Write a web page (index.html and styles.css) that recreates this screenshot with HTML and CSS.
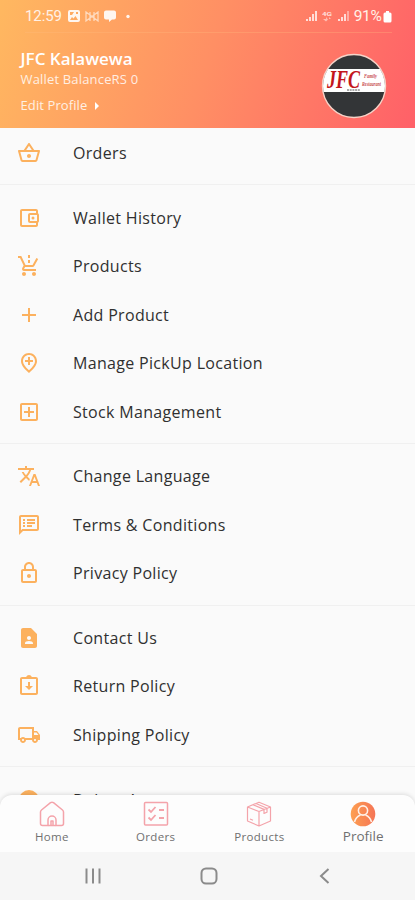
FILE: index.html
```html
<!DOCTYPE html>
<html lang="en">
<head>
<meta charset="utf-8">
<title>Profile</title>
<link rel="stylesheet" href="styles.css">
</head>
<body>
<div class="screen">
  <header class="header">
    <div class="status">
      <span class="clock">12:59</span>
      <svg class="status-left" width="64" height="14" viewBox="0 0 64 14" fill="#fff">
        <path fill-rule="evenodd" d="M2 1h8a2 2 0 0 1 2 2v8a2 2 0 0 1-2 2H2a2 2 0 0 1-2-2V3a2 2 0 0 1 2-2zm0 2v3h2l2-3zm0 8h8L7.500 7 5.500 9.500 4 8zM8 3v2h2V3z"/>
        <path d="M18 3l4 3v3l-4 3zM30 3l-4 3v3l4 3zM22 3v9M26 3v9M22 6l4 3M26 6l-4 3" fill="none" stroke="#fff" stroke-opacity=".65" stroke-width="1.300"/>
        <path d="M38 1.500h8a2 2 0 0 1 2 2v5a2 2 0 0 1-2 2h-2L41 13v-2.500h-3a2 2 0 0 1-2-2v-5a2 2 0 0 1 2-2z"/>
        <circle cx="60" cy="7.500" r="1.700"/>
      </svg>
      <div class="status-right">
        <svg width="44" height="14" viewBox="0 0 44 14" fill="#fff">
          <path opacity=".75" d="M0 10h2v2H0zM3 8h2v4H3zM6 5h2v7H6zM9 2h2v10H9zM32 10h2v2h-2zM35 8h2v4h-2zM38 5h2v7h-2z"/>
          <path opacity=".4" d="M41 2h2v10h-2z"/>
          <text class="network" x="16" y="7" textLength="10" lengthAdjust="spacingAndGlyphs">4G</text>
          <path opacity=".5" d="M17 10h3V8l2 2.500-2 2zM25 10h-2V8z"/>
        </svg>
        <span class="percent">91%</span>
        <svg width="9" height="13" viewBox="0 0 9 13" fill="#fff"><path d="M3 1h3v1.500h1A1.500 1.500 0 0 1 8.500 4v7A1.500 1.500 0 0 1 7 12.500H2A1.500 1.500 0 0 1 .5 11V4A1.500 1.500 0 0 1 2 2.500h1z"/></svg>
      </div>
    </div>
    <div class="account">
      <div>
        <div class="name">JFC Kalawewa</div>
        <div class="balance">Wallet BalanceRS 0</div>
        <div class="edit">Edit Profile <svg width="6" height="8" viewBox="0 0 6 8"><path d="M1 0l4 4-4 4z" fill="#fff"/></svg></div>
      </div>
      <svg class="avatar" width="66" height="66" viewBox="0 0 66 66">
        <defs><clipPath id="disc"><circle cx="33" cy="33" r="31"/></clipPath></defs>
        <circle cx="33" cy="33" r="31.500" fill="#333537" stroke="#f6d3c8" stroke-width="1.400"/>
        <path clip-path="url(#disc)" fill="#fff" d="M0 16h66v23H0z"/>
        <text class="logo" x="6" y="35" textLength="33" lengthAdjust="spacingAndGlyphs">JFC</text>
        <text class="script" x="43" y="25" textLength="13" lengthAdjust="spacingAndGlyphs">Family</text>
        <text class="script" x="41" y="33" textLength="19" lengthAdjust="spacingAndGlyphs">Restaurant</text>
        <path d="M26 37h13" stroke="#555" stroke-dasharray="2 .7"/>
      </svg>
    </div>
  </header>

  <main class="menu">
    <section class="group">
      <div class="row"><svg class="icon" viewBox="0 0 24 24"><path d="M22 9h-4.790l-4.380-6.560c-.19-.28-.51-.42-.83-.42s-.64.14-.83.43L6.790 9H2c-.55 0-1 .45-1 1 0 .09.010.18.040.27l2.540 9.270c.23.84 1 1.460 1.920 1.460h13c.92 0 1.690-.62 1.930-1.460l2.540-9.270L23 10c0-.55-.45-1-1-1zM12 4.800L14.800 9H9.200L12 4.800zM18.500 19l-12.990.010L3.310 11H20.700l-2.200 8zM12 13c-1.100 0-2 .9-2 2s.9 2 2 2 2-.9 2-2-.9-2-2-2z"/></svg><span>Orders</span></div>
    </section>
    <section class="group">
      <div class="row"><svg class="icon" viewBox="0 0 24 24"><path d="M21 7.280V5c0-1.100-.9-2-2-2H5c-1.100 0-2 .9-2 2v14c0 1.100.9 2 2 2h14c1.100 0 2-.9 2-2v-2.280c.59-.35 1-.98 1-1.720V9c0-.74-.41-1.370-1-1.720zM20 9v6h-7V9h7zM5 19V5h14v2h-6c-1.100 0-2 .9-2 2v6c0 1.100.9 2 2 2h6v2H5z"/><circle cx="16" cy="12" r="1.500"/></svg><span>Wallet History</span></div>
      <div class="row"><svg class="icon" viewBox="0 0 24 24"><path d="M11 9h2V6h-2v3zm0-5h2V1h-2v3zM7 18c-1.100 0-1.990.9-1.990 2S5.900 22 7 22s2-.9 2-2-.9-2-2-2zm10 0c-1.100 0-1.990.9-1.990 2s.89 2 1.990 2 2-.9 2-2-.9-2-2-2zm-8.900-5h7.450c.75 0 1.410-.41 1.750-1.030l3.860-7.010L19.420 4l-3.870 7H8.530L4.270 2H1v2h2l3.600 7.590-1.350 2.440C4.520 15.370 5.480 17 7 17h12v-2H7l1.100-2z"/></svg><span>Products</span></div>
      <div class="row"><svg class="icon" viewBox="0 0 24 24"><path d="M19 13h-6v6h-2v-6H5v-2h6V5h2v6h6z"/></svg><span>Add Product</span></div>
      <div class="row"><svg class="icon" viewBox="0 0 24 24"><path fill-rule="evenodd" d="M12 2C7.800 2 4 5.220 4 10.200c0 3.320 2.670 7.250 8 11.800 5.330-4.550 8-8.480 8-11.800C20 5.220 16.200 2 12 2zm0 17.330C7.950 15.640 6 12.540 6 10.200 6 6.570 8.650 4 12 4s6 2.570 6 6.200c0 2.340-1.950 5.440-6 9.130z"/><path d="M13 6h-2v3H8v2h3v3h2v-3h3V9h-3z"/></svg><span>Manage PickUp Location</span></div>
      <div class="row"><svg class="icon" viewBox="0 0 24 24"><path d="M19 3H5c-1.110 0-2 .9-2 2v14c0 1.100.89 2 2 2h14c1.100 0 2-.9 2-2V5c0-1.100-.9-2-2-2zm0 16H5V5h14v14zm-8-2h2v-4h4v-2h-4V7h-2v4H7v2h4z"/></svg><span>Stock Management</span></div>
    </section>
    <section class="group">
      <div class="row"><svg class="icon" viewBox="0 0 24 24"><path d="M12.870 15.070l-2.540-2.510.03-.03c1.740-1.940 2.980-4.170 3.710-6.530H17V4h-7V2H8v2H1v1.990h11.170C11.500 7.920 10.440 9.750 9 11.350 8.070 10.320 7.300 9.190 6.690 8h-2c.73 1.630 1.730 3.170 2.980 4.560l-5.090 5.020L4 19l5-5 3.110 3.110.76-2.040zM18.500 10h-2L12 22h2l1.120-3h4.750L21 22h2l-4.500-12zm-2.620 7l1.620-4.330L19.120 17h-3.240z"/></svg><span>Change Language</span></div>
      <div class="row"><svg class="icon" viewBox="0 0 24 24"><path d="M20 2H4c-1.100 0-2 .9-2 2v18l4-4h14c1.100 0 2-.9 2-2V4c0-1.100-.9-2-2-2zm0 14H5.170L4 17.170V4h16v12zM6 12h2v2H6zm0-3h2v2H6zm0-3h2v2H6zm4 6h5v2h-5zm0-3h8v2h-8zm0-3h8v2h-8z"/></svg><span>Terms &amp; Conditions</span></div>
      <div class="row"><svg class="icon" viewBox="0 0 24 24"><path d="M18 8h-1V6c0-2.760-2.240-5-5-5S7 3.240 7 6v2H6c-1.100 0-2 .9-2 2v10c0 1.100.9 2 2 2h12c1.100 0 2-.9 2-2V10c0-1.100-.9-2-2-2zM9 6c0-1.660 1.340-3 3-3s3 1.340 3 3v2H9V6zm9 14H6V10h12v10zm-6-3c1.100 0 2-.9 2-2s-.9-2-2-2-2 .9-2 2 .9 2 2 2z"/></svg><span>Privacy Policy</span></div>
    </section>
    <section class="group">
      <div class="row"><svg class="icon" viewBox="0 0 24 24"><path d="M14 2H6c-1.100 0-2 .9-2 2v16c0 1.100.89 2 1.990 2H18c1.100 0 2-.9 2-2V8l-6-6zm-2 8c1.100 0 2 .9 2 2s-.9 2-2 2-2-.9-2-2 .9-2 2-2zm4 8H8v-.57c0-.81.48-1.530 1.220-1.850a6.950 6.950 0 0 1 5.560 0A2.010 2.010 0 0 1 16 17.430V18z"/></svg><span>Contact Us</span></div>
      <div class="row"><svg class="icon" viewBox="0 0 24 24"><path d="M19 3h-4.180C14.400 1.840 13.300 1 12 1s-2.400.84-2.820 2H5c-1.100 0-2 .9-2 2v14c0 1.100.9 2 2 2h14c1.100 0 2-.9 2-2V5c0-1.100-.9-2-2-2zm0 16H5V5h14v14zm-4-7h-2V8h-2v4H8l4 4 4-4z"/></svg><span>Return Policy</span></div>
      <div class="row"><svg class="icon" viewBox="0 0 24 24"><path d="M20 8h-3V4H3c-1.100 0-2 .9-2 2v11h2c0 1.660 1.340 3 3 3s3-1.340 3-3h6c0 1.660 1.340 3 3 3s3-1.340 3-3h2v-5l-3-4zm-.5 1.500l1.960 2.500H17V9.500h2.500zM6 18c-.55 0-1-.45-1-1s.45-1 1-1 1 .45 1 1-.45 1-1 1zm2.220-3c-.55-.61-1.330-1-2.220-1s-1.670.39-2.220 1H3V6h12v9H8.220zM18 18c-.55 0-1-.45-1-1s.45-1 1-1 1 .45 1 1-.45 1-1 1z"/></svg><span>Shipping Policy</span></div>
    </section>
    <section class="group">
      <div class="row"><svg class="icon" viewBox="0 0 24 24"><circle cx="12" cy="12" r="10"/></svg><span>Delete Account</span></div>
    </section>
  </main>

  <nav class="tabs">
    <div class="tab"><svg width="26" height="26" viewBox="0 0 26 26" fill="none" stroke="#f4a3aa" stroke-width="1.500" stroke-linejoin="round"><path d="M1.500 11Q1.500 9.800 2.500 9L11.500 1.700Q13 .8 14.500 1.700L23.500 9Q24.500 9.800 24.500 11V22.500Q24.500 24.500 22.500 24.500H17V19a4 4 0 0 0-8 0v5.500H3.500Q1.500 24.500 1.500 22.500z"/><path d="M12 24.500V20h2v4.500M9 24.500h8"/></svg><span>Home</span></div>
    <div class="tab"><svg width="26" height="26" viewBox="0 0 26 26" fill="none" stroke="#f4a3aa" stroke-width="1.500"><rect x="1.500" y="1.500" width="23" height="22.500" rx="1"/><path d="M5.500 8.500l2.500 2.500 4.500-5M5.500 16.500L8 19l4.500-5M16 9h5M16 17h5" stroke-width="1.800"/></svg><span>Orders</span></div>
    <div class="tab"><svg width="26" height="26" viewBox="0 0 26 26" fill="none" stroke="#f4a3aa" stroke-width="1.200" stroke-linejoin="round"><path d="M1.500 6L13 1.200 24.500 6v14L13 25 1.500 20zM1.500 6L13 10.500 24.500 6M13 10.500V25M7 3.700l11 4.700v4l3-1.200V7.200L10 2.500M4 18l3 1.300"/></svg><span>Products</span></div>
    <div class="tab active"><svg width="26" height="26" viewBox="0 0 26 26"><defs><linearGradient id="warm" x1="0" y1="0" x2="1" y2="0"><stop stop-color="#fd9f50"/><stop offset="1" stop-color="#f57556"/></linearGradient></defs><circle cx="13" cy="13" r="12.300" fill="url(#warm)"/><g fill="none" stroke="#fff1e8" stroke-width="1.600"><circle cx="13" cy="9.500" r="4.600"/><path d="M4.500 21c1-4 3.500-6 6-7M21.500 21c-1-4-3.500-6-6-7"/></g></svg><span>Profile</span></div>
  </nav>
  <div class="system">
    <svg width="18" height="18" viewBox="0 0 18 18" stroke="#8b8b8b" stroke-width="2"><path d="M2.500 1.500v15M9 1.500v15M15.500 1.500v15"/></svg>
    <svg width="18" height="18" viewBox="0 0 18 18" fill="none" stroke="#8b8b8b" stroke-width="2"><rect x="1.500" y="1.500" width="15" height="15" rx="4.500"/></svg>
    <svg width="18" height="18" viewBox="0 0 18 18" fill="none" stroke="#8b8b8b" stroke-width="2"><path d="M12.500 2l-7.500 7 7.500 7"/></svg>
  </div>
</div>
</body>
</html>
```
FILE: styles.css
```css
* { box-sizing: border-box; }
body { margin: 0; font-family: "Open Sans", "Noto Sans", sans-serif; }
.screen { width: 415px; height: 900px; display: flex; flex-direction: column; overflow: hidden; background: #fafafa; }
.header { flex: none; height: 128px; color: #fff; background: linear-gradient(108deg, #ffb860 0%, #ff8f64 50%, #ff6068 100%); }
.status { height: 33px; margin-left: 25px; margin-right: 23px; display: flex; align-items: center; font-family: Roboto, sans-serif; border-bottom: 1px solid rgba(255, 190, 130, .3); color: #fff1e6; }
.clock { width: 43px; font-size: 15px; letter-spacing: -.1px; }
.status-left { opacity: .9; }
.status-right { margin-left: auto; display: flex; align-items: center; }
.percent { margin: 0 1.500px 0 4px; font-size: 15.500px; letter-spacing: -.3px; }
.network { font: 700 6px Roboto, sans-serif; opacity: .75; }
.account { display: flex; justify-content: space-between; padding: 15px 28px 0 20.500px; }
.name { font-size: 17px; font-weight: 600; line-height: 22px; }
.balance { font-size: 13px; line-height: 19px; letter-spacing: .17px; opacity: .82; }
.edit { margin-top: 7px; font-size: 13px; line-height: 19px; letter-spacing: .1px; color: #fff0e4; }
.edit svg { margin-left: 3px; }
.avatar { margin-top: 4.500px; }
.logo { font: italic 700 25px "Liberation Serif", serif; fill: #c3161c; }
.script { font: italic 700 6.500px "Liberation Serif", serif; fill: #c94a50; }
.menu { height: 666.500px; flex: none; padding-top: .600px; overflow: hidden; }
.group + .group { border-top: 1px solid #f0f0f0; margin-top: 7.200px; padding-top: 8px; }
.row { height: 48.500px; display: flex; align-items: center; padding-left: 17px; font-size: 16px; letter-spacing: .320px; color: #303030; }
.row span { margin-left: 32px; white-space: nowrap; }
.icon { flex: none; width: 24px; height: 24px; fill: #fcb15e; }
.tabs { flex: none; height: 57.500px; display: grid; grid-template-columns: repeat(4, 1fr); background: #fdfdfd; border-radius: 12px 12px 0 0; box-shadow: 0 -1px 4px rgba(0, 0, 0, .12); }
.tab { display: flex; flex-direction: column; align-items: center; padding-top: 6.500px; font-size: 11.500px; line-height: 19px; letter-spacing: .3px; color: #707070; }
.tab.active { font-size: 13.500px; line-height: 18px; letter-spacing: 0; }
.tab svg { flex: none; }
.system { flex: 1; display: flex; justify-content: space-between; align-items: center; padding: 0 81px 0 84px; background: #f6f6f6; }
```
